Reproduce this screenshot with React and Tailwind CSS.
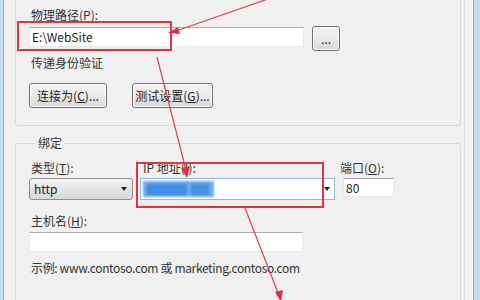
import React from 'react';

const font = { fontFamily: '"Noto Sans CJK SC", "Noto Sans", sans-serif' };

// Win7 style push button
function PushButton({ className = '', children }) {
  return (
    <button
      className={`h-[25px] rounded-[3px] border border-[#707070] bg-gradient-to-b from-[#f2f2f2] via-[#ebebeb] to-[#d6d6d6] text-[12px] leading-[16px] text-[#222] shadow-[inset_0_0_0_1px_#fcfcfc] ${className}`}
    >
      {children}
    </button>
  );
}

function TextBox({ className = '', children }) {
  return (
    <div
      className={`flex items-center border border-[#e3e9ef] border-t-[#abadb3] bg-white pl-[2px] text-[12px] leading-[16px] text-[#222] ${className}`}
    >
      {children}
    </div>
  );
}

function Arrows() {
  return (
    <svg className="pointer-events-none absolute inset-0" width="480" height="300" viewBox="0 0 480 300">
      <g stroke="#d9404e" strokeWidth="1.2" fill="none">
        <line x1="268" y1="-1" x2="176" y2="31" />
        <line x1="157" y1="57" x2="186" y2="170" />
        <line x1="245" y1="208" x2="280" y2="298" />
      </g>
      <g fill="#e0303f">
        <polygon points="168,33 178,27 180,34" />
        <polygon points="187,178 181,168 190,166" />
        <polygon points="281,302 275,292 283,290" />
      </g>
    </svg>
  );
}

export default function App() {
  return (
    <div className="relative flex h-[300px] w-[480px] overflow-hidden bg-[#f0f0f0] text-[#333]" style={font}>
      {/* left window frame */}
      <div className="w-[3px] shrink-0 bg-[#c6dcf1]" />
      <div className="w-[1px] shrink-0 bg-[#9aabbd]" />

      {/* dialog body */}
      <div className="flex w-[461px] shrink-0 flex-col border-r border-r-[#dedede]">
        {/* first group: physical path */}
        <div className="ml-[11px] h-[126px] w-[446px] shrink-0 rounded-b-[3px] border border-t-0 border-[#d5d9dd] pl-[13px]">
          <div className="ml-[2px] pt-[7px] text-[12px] leading-[16px]">
            物理路径(<u>P</u>):
          </div>
          <div className="mt-[4px] flex h-[24px] items-start">
            <TextBox className="h-[20px] w-[275px]">E:\WebSite</TextBox>
            <PushButton className="-mt-[1px] ml-[8px] w-[28px] leading-[10px]">...</PushButton>
          </div>
          <div className="ml-[2px] mt-[4px] text-[12px] leading-[16px]">传递身份验证</div>
          <div className="mt-[12px] flex gap-[25px]">
            <PushButton className="w-[78px]">
              连接为(<u>C</u>)...
            </PushButton>
            <PushButton className="w-[81px]">
              测试设置(<u>G</u>)...
            </PushButton>
          </div>
        </div>

        {/* second group: binding */}
        <fieldset className="ml-[11px] mt-[9px] h-[200px] w-[446px] shrink-0 rounded-[3px] border border-[#d5d9dd] pl-[13px]">
          <legend className="ml-[7px] px-[2px] text-[12px] leading-[16px]">绑定</legend>

          <div className="mt-[9px] flex text-[12px] leading-[16px]">
            <div className="ml-[2px] w-[109px]">
              类型(<u>T</u>):
            </div>
            <div className="ml-[3px] w-[197px]">
              IP 地址(<u>I</u>):
            </div>
            <div>
              端口(<u>O</u>):
            </div>
          </div>

          <div className="mt-[2px] flex items-start">
            <div className="flex h-[22px] w-[104px] items-center justify-between rounded-[3px] border border-[#8e8f8f] bg-gradient-to-b from-[#f2f2f2] to-[#d9d9d9] pl-[4px] pr-[5px] text-[12px] text-[#222]">
              <span>http</span>
              <span className="h-0 w-0 border-x-[3.5px] border-t-[4px] border-x-transparent border-t-[#222]" />
            </div>
            <div className="ml-[7px] flex h-[22px] w-[195px] items-center justify-between border border-[#8fb9e4] bg-white pl-[2px] pr-[4px]">
              <div className="relative h-[16px] w-[71px] blur-[1px]">
                <div className="absolute inset-0 bg-[#6ea9ec]" />
                <div className="absolute left-[4px] top-[3px] h-[11px] w-[40px] bg-[#3e8ee6]" />
                <div className="absolute left-[48px] top-[3px] h-[11px] w-[18px] bg-[#4a90e0]" />
              </div>
              <span className="h-0 w-0 border-x-[3.5px] border-t-[4px] border-x-transparent border-t-[#222]" />
            </div>
            <TextBox className="ml-[8px] h-[19px] w-[51px]">80</TextBox>
          </div>

          <div className="ml-[2px] mt-[13px] text-[12px] leading-[16px]">
            主机名(<u>H</u>):
          </div>
          <TextBox className="mt-[3px] h-[20px] w-[274px]" />

          <div className="ml-[2px] mt-[8px] text-[12px] leading-[16px] tracking-[-0.35px]">
            示例: www.contoso.com 或 marketing.contoso.com
          </div>
        </fieldset>
      </div>

      {/* right window frame */}
      <div className="flex-1 border-r border-r-[#96a8bc] bg-[#f3f3f3]" />
      <div className="w-[6px] shrink-0 bg-[#c4dbf0]" />

      {/* red annotations */}
      <div className="absolute left-[17px] top-[21px] h-[30px] w-[155px] border-2 border-[#e2363f]" />
      <div className="absolute left-[136px] top-[162px] h-[46px] w-[188px] border-2 border-[#e2363f]" />
      <Arrows />
    </div>
  );
}
